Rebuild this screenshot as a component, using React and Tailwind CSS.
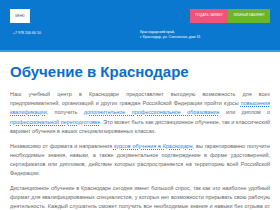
import React from "react";

const A = ({ children }) => (
  <a href="#" className="text-[#2a86e0] underline decoration-dotted">
    {children}
  </a>
);

export default function App() {
  return (
    <div
      className="w-[280px] h-[210px] overflow-hidden bg-white"
      style={{ fontFamily: '"Liberation Sans", Arial, sans-serif' }}
    >
      {/* header */}
      <div className="h-[52px] bg-[#0a78cf] border-b-2 border-[#3d9be0]">
        <div className="flex items-start">
          <div className="ml-[10px] mt-[9px] w-[20px] h-[14px] bg-white flex items-center justify-center">
            <span className="text-[3px] text-gray-600 leading-none">МЕНЮ</span>
          </div>
          <div className="ml-auto mt-[9px] mr-[10px] flex">
            <div className="h-[14px] w-[38px] bg-[#ee5378] text-white text-[3.4px] flex items-center justify-center">
              ПОДАТЬ ЗАЯВКУ
            </div>
            <div className="h-[14px] w-[42px] bg-[#6ab52b] text-white text-[3.4px] flex items-center justify-center">
              ЛИЧНЫЙ КАБИНЕТ
            </div>
          </div>
        </div>
        <div className="flex mt-[7px] text-white text-[3.6px] leading-[5px]">
          <div className="ml-[13px] w-[127px] mt-[1px]">+7 978 200 60 10</div>
          <div>
            <div>Краснодарский край,</div>
            <div>г. Краснодар, ул. Солнечная, дом 31</div>
          </div>
        </div>
      </div>

      {/* content */}
      <div className="px-[10px] pt-[11px]">
        <h1 className="text-[15px] leading-[18px] font-bold text-[#0a6dcc]">
          Обучение в Краснодаре
        </h1>
        <div className="mt-[9px] text-[5.45px] leading-[9.2px] text-[#666] text-justify flex flex-col gap-[5.5px]">
          <p>
            Наш учебный центр в Краснодаре предоставляет выгодную возможность
            для всех предпринимателей, организаций и других граждан Российской
            Федерации пройти курсы <A>повышения квалификации</A>, получить{" "}
            <A>дополнительное профессиональное образование</A> или диплом о{" "}
            <A>профессиональной переподготовке</A>. Это может быть как
            дистанционное обучение, так и классический вариант обучения в наших
            специализированных классах.
          </p>
          <p>
            Независимо от формата и направления{" "}
            <A>курсов обучения в Краснодаре</A>, вы гарантированно получите
            необходимые знания, навыки, а также документальное подтверждение в
            форме удостоверений, сертификатов или дипломов, действие которых
            распространяется на территорию всей Российской Федерации.
          </p>
          <p>
            Дистанционное обучение в Краснодаре сегодня имеет большой спрос, так
            как это наиболее удобный формат для квалифицированных специалистов,
            у которых нет возможности прерывать свою рабочую деятельность.
            Каждый слушатель сможет получить все необходимые знания и навыки без
            отрыва от производства, так как использование электронной базы
            материалов и доступ к интернету позволяют обучаться в любое время.
          </p>
        </div>
      </div>
    </div>
  );
}
